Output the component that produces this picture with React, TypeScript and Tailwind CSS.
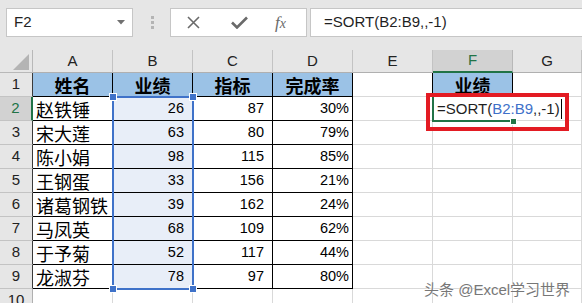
import React from "react";

const rows: [string, number, number, string][] = [
  ["赵铁锤", 26, 87, "30%"],
  ["宋大莲", 63, 80, "79%"],
  ["陈小娟", 98, 115, "85%"],
  ["王钢蛋", 33, 156, "21%"],
  ["诸葛钢铁", 39, 162, "24%"],
  ["马凤英", 68, 109, "62%"],
  ["于予菊", 52, 117, "44%"],
  ["龙淑芬", 78, 97, "80%"],
];

const LAT = { fontFamily: '"Liberation Sans", Arial, sans-serif' };
const CJK = { fontFamily: '"Noto Sans CJK SC", "Noto Sans", sans-serif' };

const colHeaders = ["A", "B", "C", "D", "E", "F", "G"];

function Corner() {
  return (
    <div className="flex items-end justify-end pr-[2px] pb-[2px] bg-[#e6e6e6] border-r border-b border-[#b8b8b8]">
      <svg width="17" height="16" viewBox="0 0 17 16">
        <polygon points="16,0 16,16 0,16" fill="#b4b4b4" />
      </svg>
    </div>
  );
}

function Handle() {
  return <div className="h-[6px] w-[6px] bg-[#3f72c9] outline outline-1 outline-white" />;
}

export default function App() {
  const grid: React.ReactNode[] = [];
  grid.push(<Corner key="corner" />);
  colHeaders.forEach((c) => {
    const sel = c === "F";
    grid.push(
      <div
        key={"h" + c}
        style={LAT}
        className={
          sel
            ? "flex items-center justify-center bg-[#d2d2d2] border-r border-[#b8b8b8] border-b-2 border-b-[#217346] text-[15px] text-[#217346]"
            : "flex items-center justify-center bg-[#e6e6e6] border-r border-b border-[#c3c3c3] border-b-[#b0b0b0] text-[15px] text-[#222]"
        }
      >
        {c}
      </div>
    );
  });

  for (let r = 1; r <= 10; r++) {
    const inTable = r <= 9;
    grid.push(
      <div
        key={"r" + r}
        style={LAT}
        className={
          r === 2
            ? "flex items-center justify-center bg-[#d2d2d2] border-b border-b-[#c3c3c3] border-r-2 border-r-[#217346] text-[15px] text-[#217346]"
            : inTable
            ? "flex items-center justify-center bg-[#e6e6e6] border-b border-b-[#c3c3c3] border-r border-r-[#3a3a3a] text-[15px] text-[#222]"
            : "flex items-center justify-center bg-[#e6e6e6] border-b border-b-[#c3c3c3] border-r border-r-[#b0b0b0] text-[15px] text-[#222]"
        }
      >
        {r}
      </div>
    );
    if (r === 1) {
      ["姓名", "业绩", "指标", "完成率"].forEach((t, i) => {
        grid.push(
          <div
            key={"c1" + i}
            style={CJK}
            className="flex items-center justify-center bg-[#9bc2e6] border-r border-b border-black text-[18px] font-bold text-black leading-none"
          >
            {t}
          </div>
        );
      });
    } else if (inTable) {
      const d = rows[r - 2];
      grid.push(
        <div key={"a" + r} style={CJK} className="flex items-center pl-[3px] border-r border-b border-black text-[18px] text-black leading-none whitespace-nowrap overflow-hidden">
          {d[0]}
        </div>
      );
      grid.push(
        <div key={"b" + r} style={LAT} className="flex items-center justify-end pr-[8px] bg-[#e8eef8] border-r border-b border-black text-[14.5px] text-black">
          {d[1]}
        </div>
      );
      grid.push(
        <div key={"c" + r} style={LAT} className="flex items-center justify-end pr-[8px] border-r border-b border-black text-[14.5px] text-black">
          {d[2]}
        </div>
      );
      grid.push(
        <div key={"d" + r} style={LAT} className="flex items-center justify-end pr-[3px] border-r border-b border-black text-[14.5px] text-black">
          {d[3]}
        </div>
      );
    } else {
      for (let i = 0; i < 4; i++) {
        grid.push(<div key={"x" + r + i} className="border-r border-b border-[#d9d9d9]" />);
      }
    }
    // E
    grid.push(
      <div
        key={"e" + r}
        className={r === 1 ? "border-r border-r-black border-b border-b-[#d9d9d9]" : "border-r border-b border-[#d9d9d9]"}
      />
    );
    // F
    if (r === 1) {
      grid.push(
        <div key="f1" style={CJK} className="flex items-center justify-center bg-[#9bc2e6] border-r border-b border-black text-[18px] font-bold text-black leading-none">
          业绩
        </div>
      );
    } else if (r === 2) {
      grid.push(
        <div key="f2" className="relative z-10 -ml-px flex items-center">
          <div className="absolute inset-x-0 -bottom-px top-0 border-l-2 border-b-2 border-[#217346]">
            <div className="absolute -right-[3px] -bottom-[4px] h-[5px] w-[5px] bg-[#217346] outline outline-1 outline-white" />
          </div>
          <div style={LAT} className="flex items-center whitespace-nowrap pl-[5px] text-[15px] text-[#1f1f1f]">
            =SORT(<span className="text-[#3e70c9]">B2:B9</span>,,-1)
            <span className="ml-[1px] inline-block h-[20px] w-[1px] bg-black" />
          </div>
        </div>
      );
    } else {
      grid.push(<div key={"f" + r} className="border-r border-b border-[#d9d9d9]" />);
    }
    // G
    grid.push(<div key={"g" + r} className="border-r border-b border-[#d9d9d9]" />);
  }

  return (
    <div className="relative w-[582px] h-[303px] overflow-hidden bg-white">
      {/* formula bar */}
      <div className="flex h-[50px] bg-[#e6e6e6] pt-[8px] pl-[6px]">
        <div className="flex h-[29px] w-[127px] items-center justify-between bg-white border border-[#c6c6c6] pl-[7px] pr-[7px]">
          <span style={LAT} className="text-[15px] text-[#222]">F2</span>
          <svg width="8" height="5" viewBox="0 0 8 5">
            <polygon points="0,0 8,0 4,4.5" fill="#707070" />
          </svg>
        </div>
        <div className="flex w-[37px] flex-col items-center justify-center gap-[2px] h-[29px] pl-[1px]">
          <div className="h-[3px] w-[3px] bg-[#b4b4b4]" />
          <div className="h-[3px] w-[3px] bg-[#b4b4b4]" />
          <div className="h-[3px] w-[3px] bg-[#b4b4b4]" />
        </div>
        <div className="flex h-[29px] w-[137px] items-center bg-white border border-[#c6c6c6] pl-[16px] gap-[31px]">
          <svg width="13" height="13" viewBox="0 0 13 13">
            <path d="M1 1 L12 12 M12 1 L1 12" stroke="#6a6a6a" strokeWidth="1.6" />
          </svg>
          <svg width="17" height="13" viewBox="0 0 17 13">
            <path d="M1 6.5 L6 11.5 L16 1.5" stroke="#6a6a6a" strokeWidth="2.6" fill="none" />
          </svg>
          <span
            className="-ml-[4px] text-[17px] italic text-[#6a6a6a] leading-none"
            style={{ fontFamily: '"Liberation Serif", "Times New Roman", serif' }}
          >
            f<span className="text-[14px]">x</span>
          </span>
        </div>
        <div className="ml-[3px] flex h-[29px] flex-1 items-center bg-white border border-[#c6c6c6] border-r-0 pl-[13px]">
          <span style={LAT} className="text-[15px] text-[#1f1f1f]">=SORT(B2:B9,,-1)</span>
        </div>
      </div>

      {/* sheet grid */}
      <div className="relative grid grid-cols-[33px_80px_80px_80px_80px_80px_80px_1fr] grid-rows-[23px_repeat(10,24px)]">
        {grid}

        {/* selection B2:B9 */}
        <div className="pointer-events-none absolute left-[112px] top-[46px] h-[194px] w-[82px] border-2 border-[#3f72c9] flex flex-col justify-between -mx-0">
          <div className="-mx-[4px] -mt-[4px] flex justify-between">
            <Handle />
            <Handle />
          </div>
          <div className="-mx-[4px] -mb-[4px] flex justify-between">
            <Handle />
            <Handle />
          </div>
        </div>
      </div>

      {/* red highlight */}
      <div className="absolute left-[426px] top-[93px] h-[38px] w-[143px] border-4 border-[#e31b23]" />

      {/* watermark */}
      <div
        className="absolute left-[424px] top-[279px] whitespace-nowrap text-[15px] text-[#777] [text-shadow:0_0_2px_#fff,0_0_1px_#fff]"
        style={{ fontFamily: '"Liberation Sans", "Noto Sans CJK SC", sans-serif' }}
      >
        头条 @Excel学习世界
      </div>
    </div>
  );
}
